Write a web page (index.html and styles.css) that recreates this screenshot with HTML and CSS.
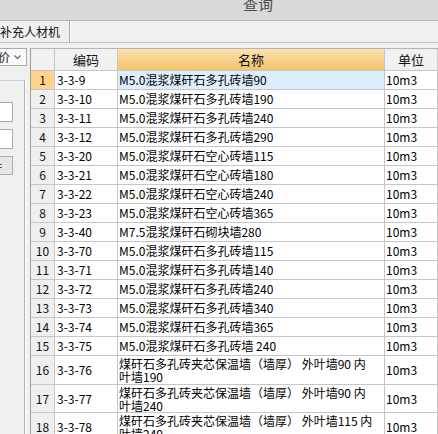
FILE: index.html
```html
<!DOCTYPE html>
<html lang="zh">
<head>
<meta charset="utf-8">
<link rel="stylesheet" href="styles.css">
</head>
<body>
<div class="window">
  <div class="titlebar"><span class="title">查询</span></div>
  <div class="tabbar"><div class="tab">补充人材机</div></div>
  <div class="main">
    <div class="side">
      <div class="dropdown"><span class="dd-text">价</span><svg class="chev" width="7" height="5" viewBox="0 0 7 5"><path d="M0.5 0.5 L3.5 3.5 L6.5 0.5" fill="none" stroke="#707070" stroke-width="1.3"/></svg></div>
      <div class="group">
        <div class="input"></div>
        <div class="input"></div>
        <div class="btn">=</div>
      </div>
    </div>
    <div class="grid">
      <div class="row head">
        <div class="c num"></div>
        <div class="c code hc">编码</div>
        <div class="c name hc hname">名称</div>
        <div class="c unit hc">单位</div>
      </div>
      <div class="row sel"><div class="c num">1</div><div class="c code">3-3-9</div><div class="c name">M5.0混浆煤矸石多孔砖墙90</div><div class="c unit">10m3</div></div>
      <div class="row"><div class="c num">2</div><div class="c code">3-3-10</div><div class="c name">M5.0混浆煤矸石多孔砖墙190</div><div class="c unit">10m3</div></div>
      <div class="row"><div class="c num">3</div><div class="c code">3-3-11</div><div class="c name">M5.0混浆煤矸石多孔砖墙240</div><div class="c unit">10m3</div></div>
      <div class="row"><div class="c num">4</div><div class="c code">3-3-12</div><div class="c name">M5.0混浆煤矸石多孔砖墙290</div><div class="c unit">10m3</div></div>
      <div class="row"><div class="c num">5</div><div class="c code">3-3-20</div><div class="c name">M5.0混浆煤矸石空心砖墙115</div><div class="c unit">10m3</div></div>
      <div class="row"><div class="c num">6</div><div class="c code">3-3-21</div><div class="c name">M5.0混浆煤矸石空心砖墙180</div><div class="c unit">10m3</div></div>
      <div class="row"><div class="c num">7</div><div class="c code">3-3-22</div><div class="c name">M5.0混浆煤矸石空心砖墙240</div><div class="c unit">10m3</div></div>
      <div class="row"><div class="c num">8</div><div class="c code">3-3-23</div><div class="c name">M5.0混浆煤矸石空心砖墙365</div><div class="c unit">10m3</div></div>
      <div class="row"><div class="c num">9</div><div class="c code">3-3-40</div><div class="c name">M7.5混浆煤矸石砌块墙280</div><div class="c unit">10m3</div></div>
      <div class="row"><div class="c num">10</div><div class="c code">3-3-70</div><div class="c name">M5.0混浆煤矸石多孔砖墙115</div><div class="c unit">10m3</div></div>
      <div class="row"><div class="c num">11</div><div class="c code">3-3-71</div><div class="c name">M5.0混浆煤矸石多孔砖墙140</div><div class="c unit">10m3</div></div>
      <div class="row"><div class="c num">12</div><div class="c code">3-3-72</div><div class="c name">M5.0混浆煤矸石多孔砖墙240</div><div class="c unit">10m3</div></div>
      <div class="row"><div class="c num">13</div><div class="c code">3-3-73</div><div class="c name">M5.0混浆煤矸石多孔砖墙340</div><div class="c unit">10m3</div></div>
      <div class="row"><div class="c num">14</div><div class="c code">3-3-74</div><div class="c name">M5.0混浆煤矸石多孔砖墙365</div><div class="c unit">10m3</div></div>
      <div class="row"><div class="c num">15</div><div class="c code">3-3-75</div><div class="c name">M5.0混浆煤矸石多孔砖墙 240</div><div class="c unit">10m3</div></div>
      <div class="row tall"><div class="c num">16</div><div class="c code">3-3-76</div><div class="c name">煤矸石多孔砖夹芯保温墙（墙厚） 外叶墙90 内<br>叶墙190</div><div class="c unit">10m3</div></div>
      <div class="row tall t2"><div class="c num">17</div><div class="c code">3-3-77</div><div class="c name">煤矸石多孔砖夹芯保温墙（墙厚） 外叶墙90 内<br>叶墙240</div><div class="c unit">10m3</div></div>
      <div class="row tall"><div class="c num">18</div><div class="c code">3-3-78</div><div class="c name">煤矸石多孔砖夹芯保温墙（墙厚） 外叶墙115 内<br>叶墙240</div><div class="c unit">10m3</div></div>
    </div>
  </div>
</div>
</body>
</html>
```
FILE: styles.css
```css
* { box-sizing: border-box; }
html, body {
  margin: 0;
  padding: 0;
  width: 438px;
  height: 434px;
  overflow: hidden;
  background: #f0f0f0;
  font-family: "Noto Sans CJK SC", sans-serif;
  font-size: 12px;
  color: #000;
}
.window {
  width: 438px;
  height: 434px;
  overflow: hidden;
  display: flex;
  flex-direction: column;
}
.titlebar {
  height: 21px;
  flex: none;
  background: #d9d9d9;
  border-bottom: 1px solid #b4b4b4;
  padding-left: 243px;
  overflow: hidden;
}
.title {
  display: block;
  font-size: 15px;
  line-height: 15px;
  margin-top: -4px;
  color: #4a4a4a;
}
.tabbar {
  height: 22px;
  flex: none;
  background: #f0f0f0;
  border-bottom: 1px solid #c4c4c4;
  display: flex;
}
.tab {
  width: 71px;
  height: 21px;
  line-height: 21px;
  text-align: right;
  padding-right: 12px;
  border-right: 1px solid #ffffff;
  box-shadow: inset -1px 0 0 #a8a8a8;
  white-space: nowrap;
  color: #111;
}
.main {
  flex: 1;
  display: flex;
  padding-top: 5px;
  min-height: 0;
}
.side {
  width: 30px;
  flex: none;
  overflow: hidden;
}
.dropdown {
  margin-left: -30px;
  width: 57px;
  height: 18px;
  background: #f9f9f9;
  border: 1px solid #acacac;
  display: flex;
  align-items: center;
  justify-content: flex-end;
  padding-right: 5px;
  gap: 4px;
}
.dd-text {
  line-height: 16px;
  color: #222;
}
.chev { display: block; }
.group {
  margin-top: 14px;
  margin-left: -10px;
  width: 35px;
  height: 400px;
  border-top: 1px solid #d0d0d0;
  border-right: 1px solid #b0b0b0;
  box-shadow: 1px 0 0 #ffffff;
  padding-top: 21px;
}
.input {
  margin-left: -10px;
  width: 33px;
  height: 20px;
  background: #fff;
  border: 1px solid #a8a8a8;
  margin-bottom: 7px;
}
.btn {
  margin-left: -10px;
  width: 33px;
  height: 19px;
  background: #e6e6e6;
  border: 1px solid #acacac;
  line-height: 17px;
  text-align: right;
  padding-right: 10px;
  font-size: 11px;
  color: #222;
}
.grid {
  flex: 1;
  border-left: 1px solid #9c9c9c;
  border-top: 1px solid #b4b4b4;
  background: #fff;
  overflow: hidden;
}
.row {
  display: grid;
  grid-template-columns: 24px 63px 267px 1fr;
  height: 19px;
}
.row.head { height: 22px; }
.row.tall { height: 29px; }
.row.t2 { height: 28px; }
.c {
  border-right: 1px solid #c6c6c6;
  border-bottom: 1px solid #c6c6c6;
  white-space: nowrap;
  overflow: hidden;
  display: flex;
  align-items: center;
  line-height: 14px;
}
.num {
  background: #efefef;
  justify-content: center;
  color: #111;
}
.sel .num { background: #fdd38e; }
.sel .name { background: #ddeefd; }
.code { padding-left: 2px; }
.name { padding-left: 1px; }
.unit { padding-left: 1px; }
.head .c { background: #f1f1f1; }
.hc { justify-content: center; padding-left: 0; font-size: 13px; color: #111; }
.head .hname { background: linear-gradient(#fbe3b2, #f3c36a); }
.tall .name {
  align-items: flex-start;
  white-space: normal;
  line-height: 13px;
  padding-top: 1px;
}
```
